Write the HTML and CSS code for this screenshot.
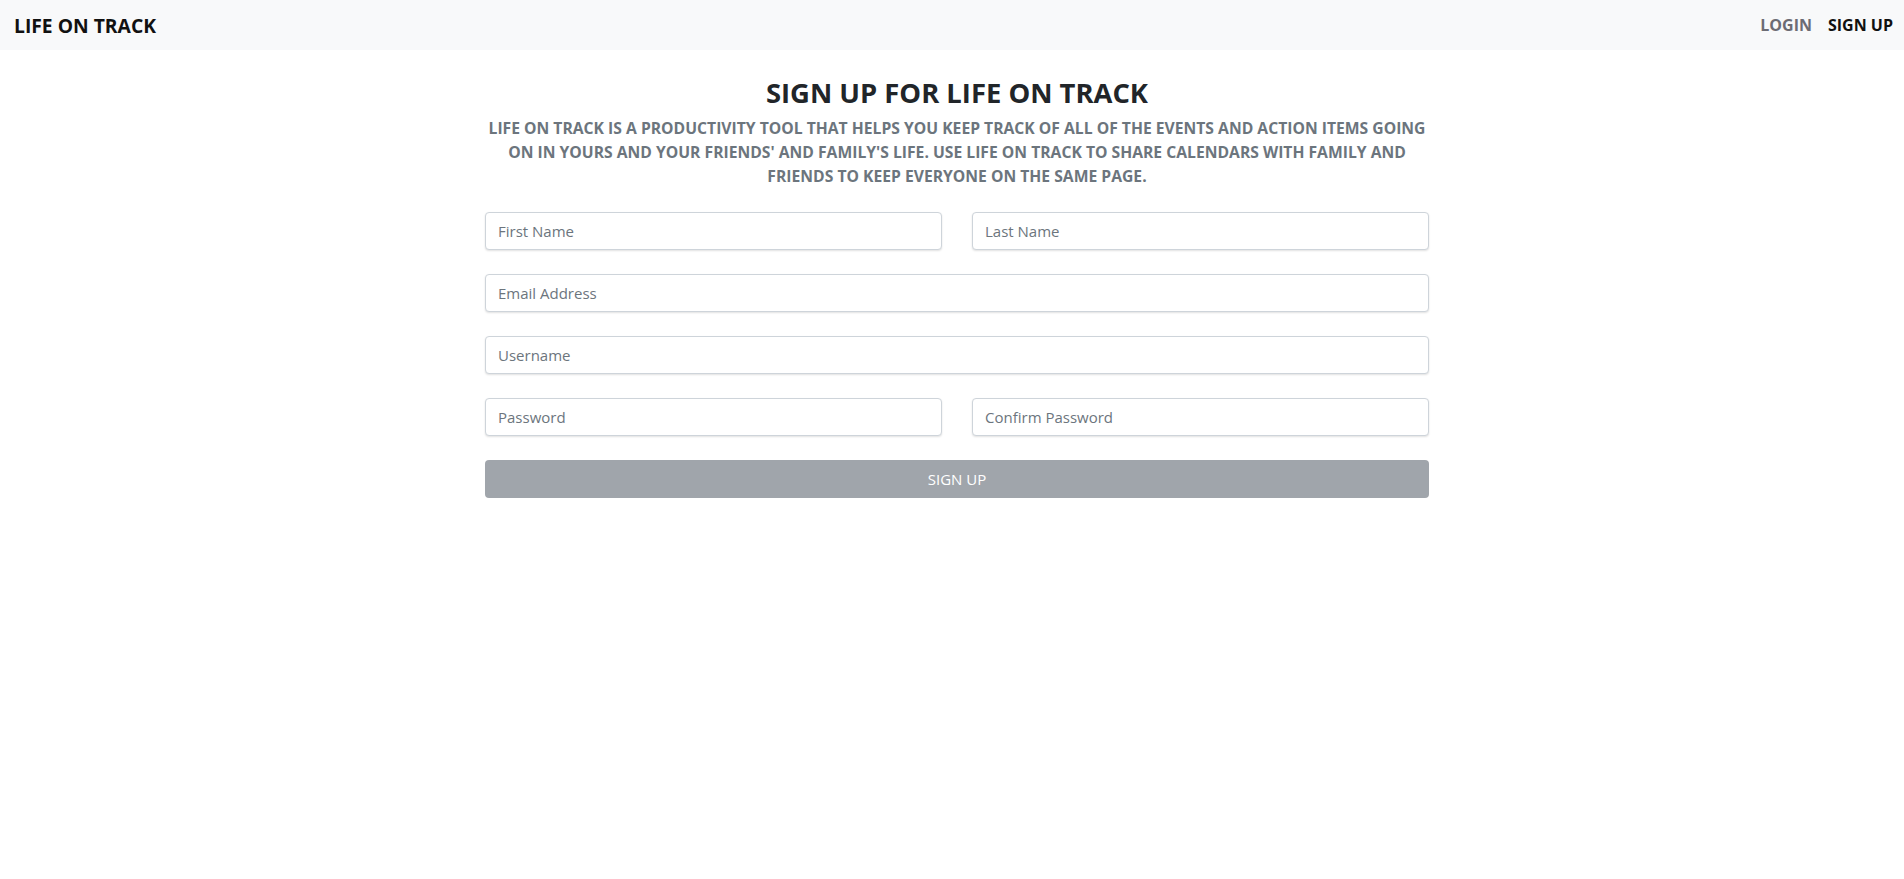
FILE: index.html
```html
<!DOCTYPE html>
<html lang="en">
<head>
<meta charset="utf-8">
<title>Life On Track - Sign Up</title>
<link rel="stylesheet" href="styles.css">
</head>
<body>
<nav class="navbar">
  <a class="brand" href="#">LIFE ON TRACK</a>
  <div class="nav-links">
    <a class="nav-link" href="#">LOGIN</a>
    <a class="nav-link active" href="#">SIGN UP</a>
  </div>
</nav>
<main class="container">
  <h1 class="title">SIGN UP FOR LIFE ON TRACK</h1>
  <p class="lead">LIFE ON TRACK IS A PRODUCTIVITY TOOL THAT HELPS YOU KEEP TRACK OF ALL OF THE EVENTS AND ACTION ITEMS GOING ON IN YOURS AND YOUR FRIENDS' AND FAMILY'S LIFE. USE LIFE ON TRACK TO SHARE CALENDARS WITH FAMILY AND FRIENDS TO KEEP EVERYONE ON THE SAME PAGE.</p>
  <form class="form">
    <div class="row">
      <input class="input" type="text" placeholder="First Name">
      <input class="input" type="text" placeholder="Last Name">
    </div>
    <div class="row">
      <input class="input" type="email" placeholder="Email Address">
    </div>
    <div class="row">
      <input class="input" type="text" placeholder="Username">
    </div>
    <div class="row">
      <input class="input" type="password" placeholder="Password">
      <input class="input" type="password" placeholder="Confirm Password">
    </div>
    <button class="btn" type="button">SIGN UP</button>
  </form>
</main>
</body>
</html>
```

FILE: styles.css
```css
* { box-sizing: border-box; }
body {
  margin: 0;
  font-family: "Open Sans", "Noto Sans", sans-serif;
  color: #212529;
  background: #fff;
}
.navbar {
  height: 50px;
  background: #f8f9fa;
  display: flex;
  align-items: center;
  justify-content: space-between;
  padding: 0 11px 0 14px;
}
.brand {
  font-size: 19.3px;
  font-weight: 700;
  color: #111;
  text-decoration: none;
}
.nav-links {
  display: flex;
  gap: 16px;
}
.nav-link {
  font-size: 16px;
  font-weight: 700;
  color: #6c6c74;
  text-decoration: none;
}
.nav-link.active { color: #111; }
.container {
  width: 944px;
  margin: 0 auto;
  padding-top: 25px;
  position: relative;
  left: 5px;
}
.title {
  margin: 0;
  text-align: center;
  font-size: 27.4px;
  font-weight: 700;
  line-height: 1.3;
  color: #212529;
}
.lead {
  margin: 5px 0 0;
  text-align: center;
  font-size: 15.7px;
  font-weight: 700;
  line-height: 24px;
  color: #6c757d;
}
.form {
  margin-top: 24px;
  display: flex;
  flex-direction: column;
  gap: 24px;
}
.row {
  display: flex;
  gap: 30px;
}
.input {
  flex: 1;
  min-width: 0;
  height: 38px;
  padding: 6px 12px;
  font-family: inherit;
  font-size: 15px;
  color: #495057;
  border: 1px solid #ced4da;
  border-radius: 4px;
  box-shadow: 0 1px 2px rgba(0,0,0,0.12);
  background: #fff;
}
.input::placeholder { color: #6c757d; }
.btn {
  height: 38px;
  border: none;
  border-radius: 4px;
  background: #a0a5ab;
  color: #fff;
  font-family: inherit;
  font-size: 15px;
}
```
